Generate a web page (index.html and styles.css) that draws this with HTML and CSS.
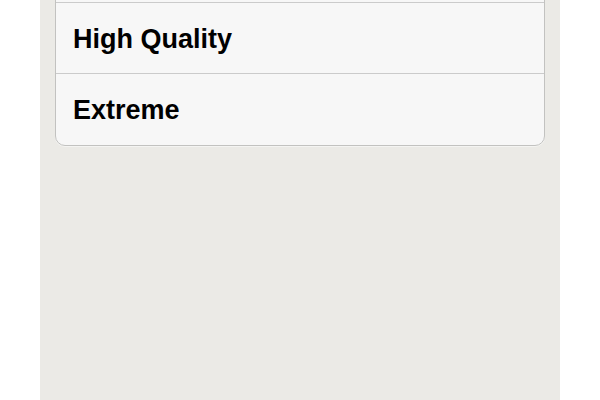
FILE: index.html
```html
<!DOCTYPE html>
<html lang="en">
<head>
  <meta charset="UTF-8" />
  <meta name="viewport" content="width=device-width, initial-scale=1.0"/>
  <title>Streaming Quality</title>
  <link rel="stylesheet" href="styles.css">
</head>
<body>

  <div class="settings-panel">
    <ul class="quality-list">
      <!-- row above, scrolled out of view -->
      <li class="quality-row"></li>
      <li class="quality-row">High Quality</li>
      <li class="quality-row">Extreme</li>
    </ul>
  </div>

</body>
</html>
```

FILE: styles.css
```css
* {
  box-sizing: border-box;
}

body {
  margin: 0;
  padding: 0;
  background-color: #fff;
  font-family: 'Liberation Sans', Arial, sans-serif;
  overflow: hidden;
}

.settings-panel {
  width: 520px;
  height: 400px;
  margin: 0 auto;
  padding: 0 15px;
  background-color: #ebeae6;
  overflow: hidden;
}

.quality-list {
  list-style: none;
  margin: -69px 0 0 0;
  padding: 0;
  background-color: #f7f7f7;
  border: 1px solid #c2c2c0;
  border-radius: 10px;
  box-shadow: 0 1px 0 #f4f4f2;
}

.quality-row {
  display: flex;
  align-items: center;
  height: 71px;
  padding: 2px 0 0 17px;
  border-bottom: 1px solid #cbcbcb;
  font-size: 27px;
  font-weight: bold;
  color: #000;
}

.quality-row:last-child {
  border-bottom: none;
}
```
